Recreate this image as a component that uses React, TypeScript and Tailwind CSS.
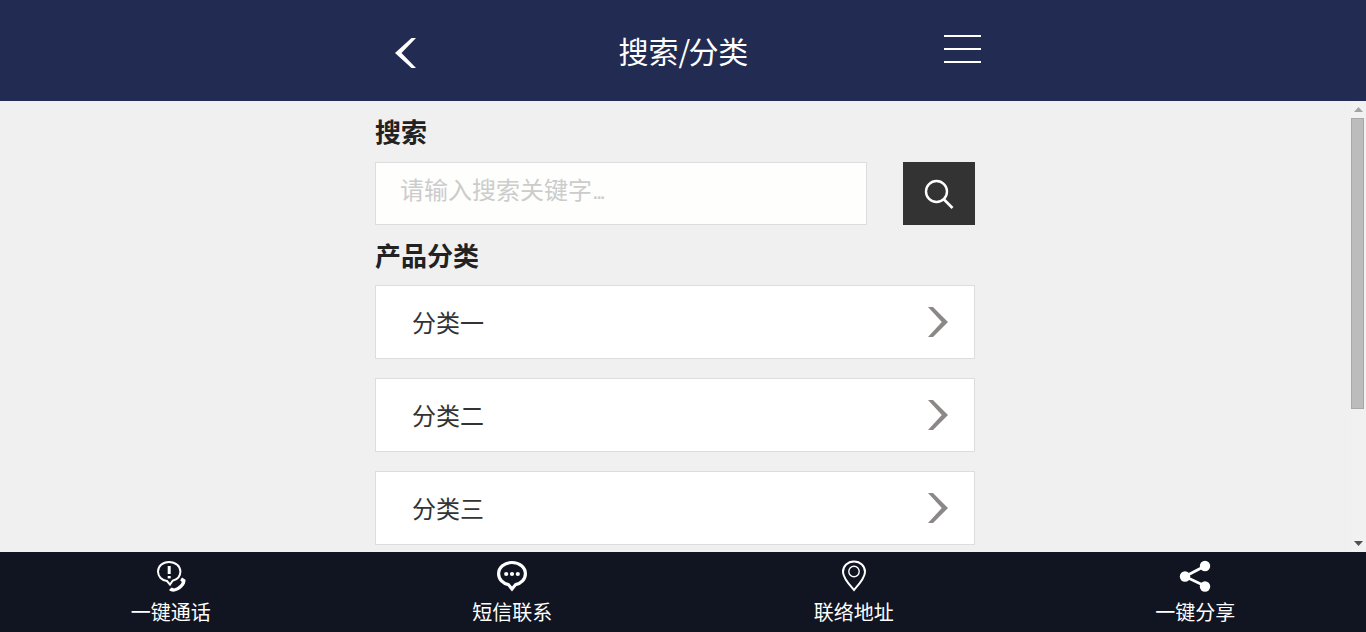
const categories = ["分类一", "分类二", "分类三"];

function RowChevron() {
  return (
    <svg width="20" height="30" viewBox="0 0 20 30" className="shrink-0">
      <path d="M0 0 H5 L20 15 L5 30 H0 L13.8 15 Z" fill="#8c8888" />
    </svg>
  );
}

function PhoneIcon() {
  return (
    <svg width="34" height="34" viewBox="0 0 34 34" fill="none" className="ml-[2px]">
      <path
        d="M14 3 C7.6 3 3 7.2 3 12.6 C3 17.6 6.8 21.4 12 22 L15 25.6 L17.6 21.8 C22.4 20.6 25.4 17 25.4 12.6 C25.4 7.2 20.6 3 14 3 Z"
        stroke="#fff"
        strokeWidth="2"
      />
      <path d="M14.2 7 V15" stroke="#fff" strokeWidth="3" />
      <path d="M14.2 17 V19.4" stroke="#fff" strokeWidth="3" />
      <path
        d="M27 18.5 L30.5 20.8 C31 25.6 26 31 19.5 32.6 C17.5 33 15.5 32.4 14 31 L16.6 28.4 L19 29.4 C22.6 28.6 26 25.6 26.8 23 L25.2 21.2 Z"
        fill="#fff"
      />
    </svg>
  );
}

function MessageIcon() {
  return (
    <svg width="32" height="32" viewBox="0 0 32 32" fill="none">
      <path
        d="M16 2.5 C8.4 2.5 2.6 7.4 2.6 13.8 C2.6 19.4 7 23.6 12.4 24.6 L16 29 L19.6 24.6 C25 23.6 29.4 19.4 29.4 13.8 C29.4 7.4 23.6 2.5 16 2.5 Z"
        stroke="#fff"
        strokeWidth="3.2"
      />
      <circle cx="10.2" cy="14" r="2.1" fill="#fff" />
      <circle cx="16" cy="14" r="2.1" fill="#fff" />
      <circle cx="21.8" cy="14" r="2.1" fill="#fff" />
    </svg>
  );
}

function PinIcon() {
  return (
    <svg width="26" height="32" viewBox="0 0 26 32" fill="none">
      <path
        d="M13 1.5 C6.6 1.5 2 6.2 2 12 C2 18 8 24.4 13 30 C18 24.4 24 18 24 12 C24 6.2 19.4 1.5 13 1.5 Z"
        stroke="#fff"
        strokeWidth="2"
      />
      <circle cx="13" cy="11.5" r="5.2" stroke="#fff" strokeWidth="1.4" />
    </svg>
  );
}

function ShareIcon() {
  return (
    <svg width="32" height="32" viewBox="0 0 32 32" fill="none">
      <path d="M26 6 L6 16.5 L26 26" stroke="#fff" strokeWidth="2.8" />
      <circle cx="26" cy="6" r="5.2" fill="#fff" />
      <circle cx="6" cy="16.5" r="5.2" fill="#fff" />
      <circle cx="26" cy="26.5" r="5.2" fill="#fff" />
    </svg>
  );
}

const footerItems = [
  { label: "一键通话", icon: <PhoneIcon /> },
  { label: "短信联系", icon: <MessageIcon /> },
  { label: "联络地址", icon: <PinIcon /> },
  { label: "一键分享", icon: <ShareIcon /> },
];

export default function App() {
  return (
    <div className="flex h-[632px] w-[1366px] flex-col overflow-hidden bg-[#f0f0f0] font-['Noto_Sans_CJK_SC','Liberation_Sans',sans-serif]">
      <header className="flex h-[101px] shrink-0 justify-center bg-[#222c53]">
        <div className="flex w-[600px] items-center justify-between pr-[2px] pl-[10px]">
          <div className="w-[30px]">
            <svg width="21" height="30" viewBox="0 0 21 30" className="mt-[5px] ml-[2px] block">
              <path d="M16.5 0 H21 L6.5 15 L21 30 H16.5 L0 15 Z" fill="#fff" />
            </svg>
          </div>
          <h1 className="mb-[2px] text-[30px] leading-none font-normal text-white">
            搜索<span className="tracking-[-2px]">/</span>分类
          </h1>
          <div className="mb-[3px] flex w-[37px] flex-col gap-[11px]">
            <div className="h-[2px] bg-white" />
            <div className="h-[2px] bg-white" />
            <div className="h-[2px] bg-white" />
          </div>
        </div>
      </header>

      <div className="flex min-h-0 flex-1">
        <main className="min-w-0 flex-1 overflow-hidden pr-px">
          <div className="mx-auto w-[600px]">
            <h2 className="flex h-[61px] items-center pb-[2px] text-[26px] leading-none font-bold text-[#222]">搜索</h2>
            <div className="flex items-stretch justify-between">
              <div className="flex h-[63px] w-[492px] items-center border border-[#ddd] bg-[#fefefc] pb-[8px] pl-[24px] text-[24px] text-[#ccc]">
                <span>
                  请输入搜索关键字<span className="font-['Liberation_Sans'] tracking-[-3px]">...</span>
                </span>
              </div>
              <button className="flex h-[63px] w-[72px] items-center justify-center bg-[#333]">
                <svg width="30" height="30" viewBox="0 0 30 30" fill="none">
                  <circle cx="12.5" cy="12.5" r="10.5" stroke="#fff" strokeWidth="2.4" />
                  <path d="M19.5 20 L28.5 29" stroke="#fff" strokeWidth="2.6" />
                </svg>
              </button>
            </div>
            <h2 className="flex h-[60px] items-center text-[26px] leading-none font-bold text-[#222]">产品分类</h2>
            <div className="flex flex-col gap-[19px]">
              {categories.map((name) => (
                <div
                  key={name}
                  className="flex h-[74px] items-center justify-between border border-[#ddd] bg-white pr-[26px] pl-[36px] text-[24px] text-[#333]"
                >
                  {name}
                  <RowChevron />
                </div>
              ))}
            </div>
          </div>
        </main>

        <div className="flex w-[15px] shrink-0 flex-col bg-[#f1f1f1]">
          <div className="flex h-[17px] items-center justify-center">
            <svg width="9" height="5" viewBox="0 0 9 5">
              <path d="M4.5 0 L9 5 H0 Z" fill="#a3a3a3" />
            </svg>
          </div>
          <div className="h-[291px] w-[13px] border border-[#a8a8a8] bg-[#bcbcbc]" />
          <div className="mt-auto flex h-[17px] items-center justify-center">
            <svg width="9" height="5" viewBox="0 0 9 5">
              <path d="M0 0 H9 L4.5 5 Z" fill="#505050" />
            </svg>
          </div>
        </div>
      </div>

      <footer className="grid h-[80px] shrink-0 grid-cols-4 bg-[#111421]">
        {footerItems.map((item) => (
          <div key={item.label} className="flex flex-col items-center pt-[7px]">
            <div className="flex h-[34px] items-center justify-center">{item.icon}</div>
            <span className="mt-[2px] text-[20px] leading-[34px] text-white">{item.label}</span>
          </div>
        ))}
      </footer>
    </div>
  );
}
